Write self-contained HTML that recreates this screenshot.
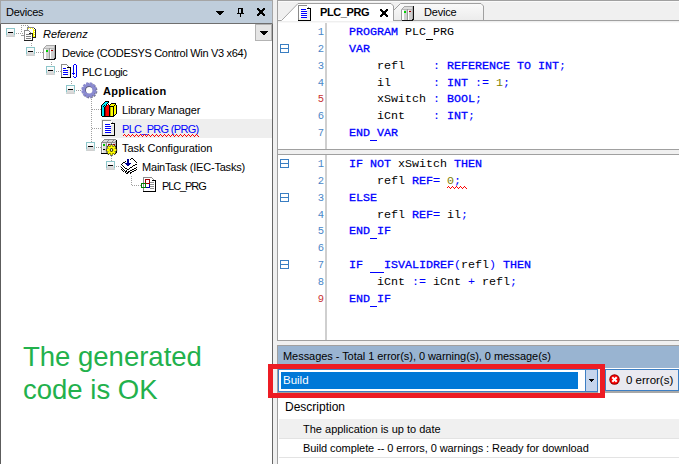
<!DOCTYPE html>
<html><head><meta charset="utf-8">
<style>
*{margin:0;padding:0;box-sizing:border-box}
html,body{width:679px;height:464px;overflow:hidden;background:#f0f0f0;position:relative;font-family:"Liberation Sans",sans-serif}
.a{position:absolute}
.t{position:absolute;white-space:nowrap;font-size:11px;line-height:13px;color:#000}
.c{position:absolute;font-family:"Liberation Mono",monospace;font-size:11.667px;letter-spacing:0px;line-height:13px;white-space:pre;color:#000}
.k{color:#0000ff;-webkit-text-stroke:0.3px #0000ff}
.o{color:#0000ff}
.n{color:#808000}
.u{position:relative;-webkit-text-fill-color:transparent;-webkit-text-stroke:0}
.u:after{content:"";position:absolute;left:0;width:7px;bottom:-1px;height:1px;background:currentColor}
.ln{position:absolute;font-family:"Liberation Mono",monospace;font-size:10.5px;line-height:12px;color:#3d7cc0;text-align:right;width:30px}
svg{position:absolute;overflow:visible}
</style></head><body>

<div class="a" style="left:0;top:0;width:273px;height:464px;background:#fff;border-left:1px solid #5c5c5c;border-right:1px solid #666"></div>
<div class="a" style="left:0;top:0;width:273px;height:24px;background:#bfcddb;border-top:1px solid #a5a5a5;border-left:1px solid #a5a5a5;border-right:1px solid #a5a5a5;border-bottom:1px solid #6f6f6f"></div>
<div class="t" style="left:6px;top:6px;letter-spacing:-0.27px">Devices</div>
<svg style="left:0;top:0" width="273" height="45" shape-rendering="crispEdges"><rect x="216" y="11" width="8" height="1" fill="#000"/><rect x="217" y="12" width="6" height="1" fill="#000"/><rect x="218" y="13" width="4" height="1" fill="#000"/><rect x="219" y="14" width="2" height="1" fill="#000"/><rect x="238" y="8" width="5" height="1" fill="#000"/><rect x="238" y="9" width="1" height="4" fill="#000"/><rect x="241" y="9" width="2" height="4" fill="#000"/><rect x="237" y="13" width="7" height="1" fill="#000"/><rect x="240" y="14" width="1" height="3" fill="#000"/><rect x="257" y="8" width="2" height="1" fill="#000"/><rect x="263" y="8" width="2" height="1" fill="#000"/><rect x="257" y="9" width="3" height="1" fill="#000"/><rect x="262" y="9" width="3" height="1" fill="#000"/><rect x="258" y="10" width="6" height="1" fill="#000"/><rect x="259" y="11" width="4" height="1" fill="#000"/><rect x="259" y="12" width="4" height="1" fill="#000"/><rect x="258" y="13" width="6" height="1" fill="#000"/><rect x="257" y="14" width="3" height="1" fill="#000"/><rect x="262" y="14" width="3" height="1" fill="#000"/><rect x="257" y="15" width="2" height="1" fill="#000"/><rect x="263" y="15" width="2" height="1" fill="#000"/><rect x="255.5" y="24.5" width="16" height="16" fill="#e5e5e5" stroke="#b3b3b3"/><rect x="260" y="31" width="8" height="1" fill="#000"/><rect x="261" y="32" width="6" height="1" fill="#000"/><rect x="262" y="33" width="4" height="1" fill="#000"/><rect x="263" y="34" width="2" height="1" fill="#000"/></svg>
<svg style="left:0;top:0" width="273" height="200" shape-rendering="crispEdges"><defs><linearGradient id="eg" x1="0" y1="0" x2="0" y2="1"><stop offset="0" stop-color="#fff"/><stop offset="0.45" stop-color="#f6f6f6"/><stop offset="0.6" stop-color="#dedede"/><stop offset="1" stop-color="#d4d4d4"/></linearGradient></defs><rect x="6" y="28" width="9" height="9" fill="url(#eg)"/><rect x="6" y="28" width="9" height="1" fill="#8cc6ca"/><rect x="6" y="29" width="1" height="6" fill="#8cc6ca"/><rect x="14" y="29" width="1" height="6" fill="#8cc6ca"/><rect x="6" y="35" width="1" height="2" fill="#c8d8d8"/><rect x="14" y="35" width="1" height="2" fill="#c8d8d8"/><rect x="7" y="36" width="7" height="1" fill="#d0d0d0"/><rect x="8" y="32" width="5" height="1" fill="#000"/><rect x="16" y="33" width="1" height="1" fill="#a0a0a0"/><rect x="18" y="33" width="1" height="1" fill="#a0a0a0"/><rect x="20" y="33" width="1" height="1" fill="#a0a0a0"/><rect x="22" y="33" width="1" height="1" fill="#a0a0a0"/><rect x="31" y="43" width="1" height="1" fill="#a0a0a0"/><rect x="31" y="45" width="1" height="1" fill="#a0a0a0"/><rect x="26" y="47" width="9" height="9" fill="url(#eg)"/><rect x="26" y="47" width="9" height="1" fill="#8cc6ca"/><rect x="26" y="48" width="1" height="6" fill="#8cc6ca"/><rect x="34" y="48" width="1" height="6" fill="#8cc6ca"/><rect x="26" y="54" width="1" height="2" fill="#c8d8d8"/><rect x="34" y="54" width="1" height="2" fill="#c8d8d8"/><rect x="27" y="55" width="7" height="1" fill="#d0d0d0"/><rect x="28" y="51" width="5" height="1" fill="#000"/><rect x="36" y="52" width="1" height="1" fill="#a0a0a0"/><rect x="38" y="52" width="1" height="1" fill="#a0a0a0"/><rect x="40" y="52" width="1" height="1" fill="#a0a0a0"/><rect x="42" y="52" width="1" height="1" fill="#a0a0a0"/><rect x="51" y="62" width="1" height="1" fill="#a0a0a0"/><rect x="51" y="64" width="1" height="1" fill="#a0a0a0"/><rect x="46" y="66" width="9" height="9" fill="url(#eg)"/><rect x="46" y="66" width="9" height="1" fill="#8cc6ca"/><rect x="46" y="67" width="1" height="6" fill="#8cc6ca"/><rect x="54" y="67" width="1" height="6" fill="#8cc6ca"/><rect x="46" y="73" width="1" height="2" fill="#c8d8d8"/><rect x="54" y="73" width="1" height="2" fill="#c8d8d8"/><rect x="47" y="74" width="7" height="1" fill="#d0d0d0"/><rect x="48" y="70" width="5" height="1" fill="#000"/><rect x="56" y="71" width="1" height="1" fill="#a0a0a0"/><rect x="58" y="71" width="1" height="1" fill="#a0a0a0"/><rect x="60" y="71" width="1" height="1" fill="#a0a0a0"/><rect x="71" y="81" width="1" height="1" fill="#a0a0a0"/><rect x="71" y="83" width="1" height="1" fill="#a0a0a0"/><rect x="66" y="85" width="9" height="9" fill="url(#eg)"/><rect x="66" y="85" width="9" height="1" fill="#8cc6ca"/><rect x="66" y="86" width="1" height="6" fill="#8cc6ca"/><rect x="74" y="86" width="1" height="6" fill="#8cc6ca"/><rect x="66" y="92" width="1" height="2" fill="#c8d8d8"/><rect x="74" y="92" width="1" height="2" fill="#c8d8d8"/><rect x="67" y="93" width="7" height="1" fill="#d0d0d0"/><rect x="68" y="89" width="5" height="1" fill="#000"/><rect x="76" y="90" width="1" height="1" fill="#a0a0a0"/><rect x="78" y="90" width="1" height="1" fill="#a0a0a0"/><rect x="80" y="90" width="1" height="1" fill="#a0a0a0"/><rect x="91" y="99" width="1" height="1" fill="#a0a0a0"/><rect x="91" y="101" width="1" height="1" fill="#a0a0a0"/><rect x="91" y="103" width="1" height="1" fill="#a0a0a0"/><rect x="91" y="105" width="1" height="1" fill="#a0a0a0"/><rect x="91" y="107" width="1" height="1" fill="#a0a0a0"/><rect x="91" y="109" width="1" height="1" fill="#a0a0a0"/><rect x="91" y="111" width="1" height="1" fill="#a0a0a0"/><rect x="91" y="113" width="1" height="1" fill="#a0a0a0"/><rect x="91" y="115" width="1" height="1" fill="#a0a0a0"/><rect x="91" y="117" width="1" height="1" fill="#a0a0a0"/><rect x="91" y="119" width="1" height="1" fill="#a0a0a0"/><rect x="91" y="121" width="1" height="1" fill="#a0a0a0"/><rect x="91" y="123" width="1" height="1" fill="#a0a0a0"/><rect x="91" y="125" width="1" height="1" fill="#a0a0a0"/><rect x="91" y="127" width="1" height="1" fill="#a0a0a0"/><rect x="91" y="129" width="1" height="1" fill="#a0a0a0"/><rect x="91" y="131" width="1" height="1" fill="#a0a0a0"/><rect x="91" y="133" width="1" height="1" fill="#a0a0a0"/><rect x="91" y="135" width="1" height="1" fill="#a0a0a0"/><rect x="91" y="137" width="1" height="1" fill="#a0a0a0"/><rect x="91" y="139" width="1" height="1" fill="#a0a0a0"/><rect x="91" y="141" width="1" height="1" fill="#a0a0a0"/><rect x="92" y="109" width="1" height="1" fill="#a0a0a0"/><rect x="94" y="109" width="1" height="1" fill="#a0a0a0"/><rect x="96" y="109" width="1" height="1" fill="#a0a0a0"/><rect x="98" y="109" width="1" height="1" fill="#a0a0a0"/><rect x="100" y="109" width="1" height="1" fill="#a0a0a0"/><rect x="92" y="128" width="1" height="1" fill="#a0a0a0"/><rect x="94" y="128" width="1" height="1" fill="#a0a0a0"/><rect x="96" y="128" width="1" height="1" fill="#a0a0a0"/><rect x="98" y="128" width="1" height="1" fill="#a0a0a0"/><rect x="100" y="128" width="1" height="1" fill="#a0a0a0"/><rect x="86" y="142" width="9" height="9" fill="url(#eg)"/><rect x="86" y="142" width="9" height="1" fill="#8cc6ca"/><rect x="86" y="143" width="1" height="6" fill="#8cc6ca"/><rect x="94" y="143" width="1" height="6" fill="#8cc6ca"/><rect x="86" y="149" width="1" height="2" fill="#c8d8d8"/><rect x="94" y="149" width="1" height="2" fill="#c8d8d8"/><rect x="87" y="150" width="7" height="1" fill="#d0d0d0"/><rect x="88" y="146" width="5" height="1" fill="#000"/><rect x="96" y="147" width="1" height="1" fill="#a0a0a0"/><rect x="98" y="147" width="1" height="1" fill="#a0a0a0"/><rect x="100" y="147" width="1" height="1" fill="#a0a0a0"/><rect x="111" y="156" width="1" height="1" fill="#a0a0a0"/><rect x="111" y="158" width="1" height="1" fill="#a0a0a0"/><rect x="111" y="160" width="1" height="1" fill="#a0a0a0"/><rect x="106" y="161" width="9" height="9" fill="url(#eg)"/><rect x="106" y="161" width="9" height="1" fill="#8cc6ca"/><rect x="106" y="162" width="1" height="6" fill="#8cc6ca"/><rect x="114" y="162" width="1" height="6" fill="#8cc6ca"/><rect x="106" y="168" width="1" height="2" fill="#c8d8d8"/><rect x="114" y="168" width="1" height="2" fill="#c8d8d8"/><rect x="107" y="169" width="7" height="1" fill="#d0d0d0"/><rect x="108" y="165" width="5" height="1" fill="#000"/><rect x="116" y="166" width="1" height="1" fill="#a0a0a0"/><rect x="118" y="166" width="1" height="1" fill="#a0a0a0"/><rect x="120" y="166" width="1" height="1" fill="#a0a0a0"/><rect x="131" y="176" width="1" height="1" fill="#a0a0a0"/><rect x="131" y="178" width="1" height="1" fill="#a0a0a0"/><rect x="131" y="180" width="1" height="1" fill="#a0a0a0"/><rect x="131" y="182" width="1" height="1" fill="#a0a0a0"/><rect x="131" y="184" width="1" height="1" fill="#a0a0a0"/><rect x="132" y="185" width="1" height="1" fill="#a0a0a0"/><rect x="134" y="185" width="1" height="1" fill="#a0a0a0"/><rect x="136" y="185" width="1" height="1" fill="#a0a0a0"/><rect x="138" y="185" width="1" height="1" fill="#a0a0a0"/><rect x="140" y="185" width="1" height="1" fill="#a0a0a0"/></svg>
<div class="a" style="left:101px;top:119px;width:171px;height:19px;background:#eeeeee"></div>
<svg style="left:0;top:0" width="273" height="200" shape-rendering="crispEdges"><rect x="21" y="25" width="1" height="1" fill="#999"/><rect x="23" y="25" width="1" height="1" fill="#999"/><rect x="25" y="25" width="1" height="1" fill="#999"/><rect x="27" y="25" width="1" height="1" fill="#999"/><rect x="21" y="27" width="1" height="1" fill="#999"/><rect x="21" y="29" width="1" height="1" fill="#999"/><rect x="21" y="31" width="1" height="1" fill="#999"/><rect x="28" y="26" width="1" height="1" fill="#999"/><rect x="21" y="35" width="3" height="1" fill="#999"/><rect x="27" y="27" width="7" height="1" fill="#8a8a8a"/><rect x="27" y="27" width="1" height="3" fill="#8a8a8a"/><rect x="28" y="28" width="6" height="1" fill="#ffff00"/><rect x="33" y="28" width="2" height="9" fill="#ffff00"/><rect x="28" y="29" width="5" height="1" fill="#ffffff"/><rect x="29" y="28" width="1" height="1" fill="#fff"/><rect x="31" y="28" width="1" height="1" fill="#fff"/><rect x="33" y="28" width="1" height="1" fill="#fff"/><rect x="34" y="29" width="1" height="1" fill="#fff"/><rect x="34" y="31" width="1" height="1" fill="#fff"/><rect x="34" y="33" width="1" height="1" fill="#fff"/><rect x="34" y="35" width="1" height="1" fill="#fff"/><rect x="34" y="37" width="1" height="1" fill="#fff"/><rect x="35" y="29" width="1" height="9" fill="#222"/><rect x="32" y="37" width="4" height="1" fill="#222"/><rect x="34" y="28" width="1" height="1" fill="#222"/><rect x="24" y="30" width="5" height="11" fill="#fff"/><rect x="29" y="33" width="3" height="7" fill="#fff"/><rect x="24" y="30" width="1" height="10" fill="#8a8a8a"/><rect x="24" y="30" width="5" height="1" fill="#8a8a8a"/><rect x="29" y="31" width="1" height="1" fill="#8a8a8a"/><rect x="30" y="32" width="1" height="1" fill="#8a8a8a"/><rect x="29" y="33" width="4" height="1" fill="#222"/><rect x="32" y="33" width="1" height="8" fill="#222"/><rect x="24" y="40" width="9" height="1" fill="#222"/><rect x="26" y="34" width="5" height="1" fill="#808080"/><rect x="26" y="36" width="5" height="1" fill="#808080"/><rect x="26" y="38" width="5" height="1" fill="#808080"/><rect x="46" y="45" width="10" height="1" fill="#a8a8a8"/><rect x="45" y="46" width="1" height="1" fill="#a8a8a8"/><rect x="44" y="47" width="1" height="1" fill="#a8a8a8"/><rect x="46" y="46" width="9" height="2" fill="#dcdcdc"/><rect x="45" y="47" width="9" height="1" fill="#dcdcdc"/><rect x="43" y="48" width="1" height="11" fill="#9a9a9a"/><rect x="43" y="48" width="11" height="1" fill="#b8b8b8"/><rect x="44" y="49" width="2" height="10" fill="#ffffff"/><rect x="46" y="49" width="3" height="10" fill="#cfcfcf"/><rect x="49" y="48" width="1" height="11" fill="#9a9a9a"/><rect x="50" y="49" width="1" height="10" fill="#ffffff"/><rect x="51" y="49" width="3" height="10" fill="#cfcfcf"/><rect x="54" y="46" width="1" height="13" fill="#b0b0b0"/><rect x="55" y="45" width="1" height="14" fill="#111"/><rect x="44" y="59" width="11" height="1" fill="#111"/><rect x="54" y="58" width="1" height="1" fill="#111"/><rect x="46" y="50" width="2" height="2" fill="#00d000"/><rect x="51" y="50" width="2" height="1" fill="#a00000"/><rect x="61" y="64" width="6" height="13" fill="#fff"/><rect x="67" y="67" width="3" height="10" fill="#f4f4f0"/><rect x="61" y="64" width="1" height="13" fill="#8a8a8a"/><rect x="61" y="64" width="6" height="1" fill="#8a8a8a"/><rect x="67" y="65" width="1" height="1" fill="#8a8a8a"/><rect x="68" y="66" width="1" height="1" fill="#8a8a8a"/><rect x="67" y="67" width="4" height="1" fill="#000"/><rect x="70" y="67" width="1" height="11" fill="#000"/><rect x="61" y="77" width="10" height="1" fill="#000"/><rect x="63" y="68" width="3" height="1" fill="#0000ff"/><rect x="63" y="70" width="5" height="1" fill="#0000ff"/><rect x="63" y="72" width="5" height="1" fill="#0000ff"/><rect x="63" y="74" width="5" height="1" fill="#0000ff"/><rect x="74" y="64" width="2" height="1" fill="#0000ff"/><rect x="73" y="65" width="1" height="9" fill="#0000ff"/><rect x="76" y="65" width="1" height="12" fill="#0000ff"/><rect x="74" y="77" width="2" height="1" fill="#0000ff"/><rect x="72" y="73" width="3" height="1" fill="#0000ff"/><rect x="73" y="74" width="1" height="1" fill="#0000ff"/><rect x="73" y="76" width="1" height="1" fill="#0000ff"/><rect x="105" y="101" width="4" height="1" fill="#000"/><rect x="104" y="102" width="1" height="1" fill="#000"/><rect x="105" y="102" width="3" height="1" fill="#00e8f8"/><rect x="108" y="102" width="1" height="1" fill="#000"/><rect x="103" y="103" width="1" height="1" fill="#000"/><rect x="104" y="103" width="3" height="1" fill="#00e8f8"/><rect x="107" y="103" width="1" height="1" fill="#000"/><rect x="111" y="103" width="5" height="1" fill="#000"/><rect x="102" y="104" width="1" height="1" fill="#000"/><rect x="103" y="104" width="3" height="1" fill="#00e8f8"/><rect x="106" y="104" width="1" height="1" fill="#000"/><rect x="108" y="104" width="1" height="1" fill="#000"/><rect x="110" y="104" width="1" height="1" fill="#000"/><rect x="111" y="104" width="4" height="1" fill="#ffff00"/><rect x="115" y="104" width="1" height="1" fill="#000"/><rect x="101" y="105" width="1" height="1" fill="#000"/><rect x="102" y="105" width="2" height="1" fill="#00e8f8"/><rect x="104" y="105" width="1" height="1" fill="#000"/><rect x="105" y="105" width="1" height="1" fill="#00e8f8"/><rect x="106" y="105" width="1" height="1" fill="#000"/><rect x="107" y="105" width="2" height="1" fill="#ff0000"/><rect x="109" y="105" width="1" height="1" fill="#000"/><rect x="110" y="105" width="4" height="1" fill="#ffff00"/><rect x="114" y="105" width="1" height="1" fill="#000"/><rect x="115" y="105" width="1" height="1" fill="#ffff00"/><rect x="116" y="105" width="1" height="1" fill="#000"/><rect x="101" y="106" width="1" height="1" fill="#000"/><rect x="102" y="106" width="1" height="1" fill="#00e8f8"/><rect x="103" y="106" width="1" height="1" fill="#000"/><rect x="104" y="106" width="1" height="1" fill="#00e8f8"/><rect x="105" y="106" width="1" height="1" fill="#000"/><rect x="106" y="106" width="3" height="1" fill="#ff0000"/><rect x="109" y="106" width="5" height="1" fill="#000"/><rect x="114" y="106" width="2" height="1" fill="#ffff00"/><rect x="116" y="106" width="1" height="1" fill="#000"/><rect x="101" y="107" width="1" height="1" fill="#000"/><rect x="102" y="107" width="2" height="1" fill="#00e8f8"/><rect x="104" y="107" width="1" height="1" fill="#000"/><rect x="105" y="107" width="1" height="1" fill="#a00000"/><rect x="106" y="107" width="3" height="1" fill="#ff0000"/><rect x="109" y="107" width="1" height="1" fill="#000"/><rect x="110" y="107" width="1" height="1" fill="#a8a800"/><rect x="111" y="107" width="2" height="1" fill="#ffff00"/><rect x="113" y="107" width="1" height="1" fill="#000"/><rect x="114" y="107" width="2" height="1" fill="#ffff00"/><rect x="116" y="107" width="1" height="1" fill="#000"/><rect x="101" y="108" width="1" height="1" fill="#000"/><rect x="102" y="108" width="2" height="1" fill="#00e8f8"/><rect x="104" y="108" width="1" height="1" fill="#000"/><rect x="105" y="108" width="1" height="1" fill="#a00000"/><rect x="106" y="108" width="3" height="1" fill="#ff0000"/><rect x="109" y="108" width="1" height="1" fill="#000"/><rect x="110" y="108" width="1" height="1" fill="#a8a800"/><rect x="111" y="108" width="2" height="1" fill="#ffff00"/><rect x="113" y="108" width="1" height="1" fill="#000"/><rect x="114" y="108" width="2" height="1" fill="#ffff00"/><rect x="116" y="108" width="1" height="1" fill="#000"/><rect x="101" y="109" width="1" height="1" fill="#000"/><rect x="102" y="109" width="2" height="1" fill="#00e8f8"/><rect x="104" y="109" width="1" height="1" fill="#000"/><rect x="105" y="109" width="1" height="1" fill="#a00000"/><rect x="106" y="109" width="3" height="1" fill="#ff0000"/><rect x="109" y="109" width="1" height="1" fill="#000"/><rect x="110" y="109" width="1" height="1" fill="#a8a800"/><rect x="111" y="109" width="2" height="1" fill="#ffff00"/><rect x="113" y="109" width="1" height="1" fill="#000"/><rect x="114" y="109" width="2" height="1" fill="#ffff00"/><rect x="116" y="109" width="1" height="1" fill="#000"/><rect x="101" y="110" width="1" height="1" fill="#000"/><rect x="102" y="110" width="2" height="1" fill="#00e8f8"/><rect x="104" y="110" width="1" height="1" fill="#000"/><rect x="105" y="110" width="1" height="1" fill="#a00000"/><rect x="106" y="110" width="3" height="1" fill="#ff0000"/><rect x="109" y="110" width="1" height="1" fill="#000"/><rect x="110" y="110" width="1" height="1" fill="#a8a800"/><rect x="111" y="110" width="2" height="1" fill="#ffff00"/><rect x="113" y="110" width="1" height="1" fill="#000"/><rect x="114" y="110" width="2" height="1" fill="#ffff00"/><rect x="116" y="110" width="1" height="1" fill="#000"/><rect x="101" y="111" width="1" height="1" fill="#000"/><rect x="102" y="111" width="2" height="1" fill="#00e8f8"/><rect x="104" y="111" width="1" height="1" fill="#000"/><rect x="105" y="111" width="1" height="1" fill="#a00000"/><rect x="106" y="111" width="3" height="1" fill="#ff0000"/><rect x="109" y="111" width="1" height="1" fill="#000"/><rect x="110" y="111" width="1" height="1" fill="#a8a800"/><rect x="111" y="111" width="2" height="1" fill="#ffff00"/><rect x="113" y="111" width="1" height="1" fill="#000"/><rect x="114" y="111" width="2" height="1" fill="#ffff00"/><rect x="116" y="111" width="1" height="1" fill="#000"/><rect x="101" y="112" width="1" height="1" fill="#000"/><rect x="102" y="112" width="2" height="1" fill="#00e8f8"/><rect x="104" y="112" width="1" height="1" fill="#000"/><rect x="105" y="112" width="1" height="1" fill="#a00000"/><rect x="106" y="112" width="3" height="1" fill="#ff0000"/><rect x="109" y="112" width="1" height="1" fill="#000"/><rect x="110" y="112" width="1" height="1" fill="#a8a800"/><rect x="111" y="112" width="2" height="1" fill="#ffff00"/><rect x="113" y="112" width="1" height="1" fill="#000"/><rect x="114" y="112" width="2" height="1" fill="#ffff00"/><rect x="116" y="112" width="1" height="1" fill="#000"/><rect x="101" y="113" width="1" height="1" fill="#000"/><rect x="102" y="113" width="2" height="1" fill="#00e8f8"/><rect x="104" y="113" width="1" height="1" fill="#000"/><rect x="105" y="113" width="1" height="1" fill="#a00000"/><rect x="106" y="113" width="3" height="1" fill="#ff0000"/><rect x="109" y="113" width="1" height="1" fill="#000"/><rect x="110" y="113" width="1" height="1" fill="#a8a800"/><rect x="111" y="113" width="2" height="1" fill="#ffff00"/><rect x="113" y="113" width="1" height="1" fill="#000"/><rect x="114" y="113" width="2" height="1" fill="#ffff00"/><rect x="116" y="113" width="1" height="1" fill="#000"/><rect x="101" y="114" width="1" height="1" fill="#000"/><rect x="102" y="114" width="2" height="1" fill="#00e8f8"/><rect x="104" y="114" width="1" height="1" fill="#000"/><rect x="105" y="114" width="1" height="1" fill="#a00000"/><rect x="106" y="114" width="3" height="1" fill="#ff0000"/><rect x="109" y="114" width="1" height="1" fill="#000"/><rect x="110" y="114" width="1" height="1" fill="#a8a800"/><rect x="111" y="114" width="2" height="1" fill="#ffff00"/><rect x="113" y="114" width="1" height="1" fill="#000"/><rect x="114" y="114" width="1" height="1" fill="#ffff00"/><rect x="115" y="114" width="1" height="1" fill="#000"/><rect x="101" y="115" width="1" height="1" fill="#000"/><rect x="102" y="115" width="2" height="1" fill="#00e8f8"/><rect x="104" y="115" width="1" height="1" fill="#000"/><rect x="105" y="115" width="1" height="1" fill="#a00000"/><rect x="106" y="115" width="3" height="1" fill="#ff0000"/><rect x="109" y="115" width="1" height="1" fill="#000"/><rect x="110" y="115" width="1" height="1" fill="#a8a800"/><rect x="111" y="115" width="2" height="1" fill="#ffff00"/><rect x="113" y="115" width="2" height="1" fill="#000"/><rect x="102" y="116" width="12" height="1" fill="#000"/><rect x="102" y="120" width="9" height="15" fill="#fff"/><rect x="111" y="123" width="3" height="12" fill="#fff"/><rect x="111" y="125" width="3" height="10" fill="#ececec"/><rect x="103" y="133" width="11" height="2" fill="#f4f4ee"/><rect x="102" y="120" width="1" height="15" fill="#8a8a8a"/><rect x="102" y="120" width="9" height="1" fill="#8a8a8a"/><rect x="111" y="121" width="1" height="1" fill="#8a8a8a"/><rect x="112" y="122" width="1" height="1" fill="#8a8a8a"/><rect x="113" y="123" width="1" height="1" fill="#aaa"/><rect x="111" y="123" width="4" height="1" fill="#000"/><rect x="111" y="121" width="1" height="2" fill="#fff"/><rect x="114" y="123" width="1" height="13" fill="#000"/><rect x="102" y="135" width="13" height="1" fill="#000"/><rect x="105" y="124" width="5" height="1" fill="#0000ff"/><rect x="105" y="126" width="6" height="1" fill="#0000ff"/><rect x="105" y="128" width="6" height="1" fill="#0000ff"/><rect x="105" y="130" width="6" height="1" fill="#0000ff"/><rect x="105" y="132" width="6" height="1" fill="#0000ff"/><rect x="104" y="139" width="12" height="1" fill="#8c8c8c"/><rect x="103" y="140" width="1" height="1" fill="#8c8c8c"/><rect x="104" y="140" width="4" height="1" fill="#d8d8d8"/><rect x="108" y="140" width="1" height="1" fill="#8c8c8c"/><rect x="109" y="140" width="4" height="1" fill="#d8d8d8"/><rect x="113" y="140" width="1" height="1" fill="#8c8c8c"/><rect x="114" y="140" width="2" height="1" fill="#d8d8d8"/><rect x="116" y="140" width="1" height="1" fill="#000"/><rect x="102" y="141" width="1" height="1" fill="#8c8c8c"/><rect x="103" y="141" width="4" height="1" fill="#d8d8d8"/><rect x="107" y="141" width="1" height="1" fill="#8c8c8c"/><rect x="108" y="141" width="4" height="1" fill="#d8d8d8"/><rect x="112" y="141" width="1" height="1" fill="#8c8c8c"/><rect x="113" y="141" width="2" height="1" fill="#d8d8d8"/><rect x="115" y="141" width="1" height="1" fill="#8c8c8c"/><rect x="116" y="141" width="1" height="1" fill="#000"/><rect x="101" y="142" width="14" height="1" fill="#8c8c8c"/><rect x="115" y="142" width="1" height="1" fill="#b0b0b0"/><rect x="116" y="142" width="1" height="1" fill="#000"/><rect x="101" y="143" width="1" height="1" fill="#8c8c8c"/><rect x="102" y="143" width="4" height="1" fill="#dedede"/><rect x="106" y="143" width="1" height="1" fill="#8c8c8c"/><rect x="107" y="143" width="4" height="1" fill="#dedede"/><rect x="111" y="143" width="1" height="1" fill="#8c8c8c"/><rect x="112" y="143" width="3" height="1" fill="#dedede"/><rect x="115" y="143" width="1" height="1" fill="#b0b0b0"/><rect x="116" y="143" width="1" height="1" fill="#000"/><rect x="101" y="144" width="1" height="1" fill="#8c8c8c"/><rect x="102" y="144" width="1" height="1" fill="#dedede"/><rect x="103" y="144" width="2" height="1" fill="#00c000"/><rect x="105" y="144" width="1" height="1" fill="#dedede"/><rect x="106" y="144" width="1" height="1" fill="#8c8c8c"/><rect x="107" y="144" width="1" height="1" fill="#dedede"/><rect x="108" y="144" width="2" height="1" fill="#a00000"/><rect x="110" y="144" width="1" height="1" fill="#dedede"/><rect x="111" y="144" width="1" height="1" fill="#8c8c8c"/><rect x="112" y="144" width="1" height="1" fill="#dedede"/><rect x="113" y="144" width="2" height="1" fill="#a00000"/><rect x="115" y="144" width="1" height="1" fill="#b0b0b0"/><rect x="116" y="144" width="1" height="1" fill="#000"/><rect x="101" y="145" width="1" height="1" fill="#8c8c8c"/><rect x="102" y="145" width="1" height="1" fill="#dedede"/><rect x="103" y="145" width="2" height="1" fill="#00c000"/><rect x="105" y="145" width="1" height="1" fill="#dedede"/><rect x="106" y="145" width="1" height="1" fill="#8c8c8c"/><rect x="107" y="145" width="4" height="1" fill="#dedede"/><rect x="111" y="145" width="1" height="1" fill="#8c8c8c"/><rect x="112" y="145" width="3" height="1" fill="#dedede"/><rect x="115" y="145" width="1" height="1" fill="#b0b0b0"/><rect x="116" y="145" width="1" height="1" fill="#000"/><rect x="101" y="146" width="1" height="1" fill="#8c8c8c"/><rect x="102" y="146" width="4" height="1" fill="#dedede"/><rect x="106" y="146" width="1" height="1" fill="#8c8c8c"/><rect x="107" y="146" width="4" height="1" fill="#dedede"/><rect x="111" y="146" width="1" height="1" fill="#8c8c8c"/><rect x="112" y="146" width="3" height="1" fill="#dedede"/><rect x="115" y="146" width="1" height="1" fill="#b0b0b0"/><rect x="116" y="146" width="1" height="1" fill="#000"/><rect x="101" y="147" width="1" height="1" fill="#8c8c8c"/><rect x="102" y="147" width="4" height="1" fill="#dedede"/><rect x="106" y="147" width="1" height="1" fill="#8c8c8c"/><rect x="107" y="147" width="4" height="1" fill="#dedede"/><rect x="111" y="147" width="1" height="1" fill="#8c8c8c"/><rect x="112" y="147" width="3" height="1" fill="#dedede"/><rect x="115" y="147" width="1" height="1" fill="#b0b0b0"/><rect x="116" y="147" width="1" height="1" fill="#000"/><rect x="101" y="148" width="1" height="1" fill="#8c8c8c"/><rect x="102" y="148" width="4" height="1" fill="#dedede"/><rect x="106" y="148" width="1" height="1" fill="#8c8c8c"/><rect x="107" y="148" width="4" height="1" fill="#dedede"/><rect x="111" y="148" width="1" height="1" fill="#8c8c8c"/><rect x="112" y="148" width="3" height="1" fill="#dedede"/><rect x="115" y="148" width="1" height="1" fill="#b0b0b0"/><rect x="116" y="148" width="1" height="1" fill="#000"/><rect x="101" y="149" width="1" height="1" fill="#8c8c8c"/><rect x="102" y="149" width="1" height="1" fill="#dedede"/><rect x="103" y="149" width="2" height="1" fill="#000"/><rect x="105" y="149" width="1" height="1" fill="#dedede"/><rect x="106" y="149" width="1" height="1" fill="#8c8c8c"/><rect x="107" y="149" width="4" height="1" fill="#dedede"/><rect x="111" y="149" width="1" height="1" fill="#8c8c8c"/><rect x="112" y="149" width="3" height="1" fill="#dedede"/><rect x="115" y="149" width="1" height="1" fill="#b0b0b0"/><rect x="116" y="149" width="1" height="1" fill="#000"/><rect x="101" y="150" width="1" height="1" fill="#8c8c8c"/><rect x="102" y="150" width="4" height="1" fill="#dedede"/><rect x="106" y="150" width="1" height="1" fill="#8c8c8c"/><rect x="107" y="150" width="4" height="1" fill="#dedede"/><rect x="111" y="150" width="1" height="1" fill="#8c8c8c"/><rect x="112" y="150" width="3" height="1" fill="#dedede"/><rect x="115" y="150" width="1" height="1" fill="#b0b0b0"/><rect x="116" y="150" width="1" height="1" fill="#000"/><rect x="101" y="151" width="1" height="1" fill="#8c8c8c"/><rect x="102" y="151" width="4" height="1" fill="#dedede"/><rect x="106" y="151" width="1" height="1" fill="#8c8c8c"/><rect x="107" y="151" width="4" height="1" fill="#dedede"/><rect x="111" y="151" width="1" height="1" fill="#8c8c8c"/><rect x="112" y="151" width="3" height="1" fill="#dedede"/><rect x="115" y="151" width="1" height="1" fill="#b0b0b0"/><rect x="116" y="151" width="1" height="1" fill="#000"/><rect x="101" y="152" width="1" height="1" fill="#8c8c8c"/><rect x="102" y="152" width="4" height="1" fill="#dedede"/><rect x="106" y="152" width="1" height="1" fill="#8c8c8c"/><rect x="107" y="152" width="4" height="1" fill="#dedede"/><rect x="111" y="152" width="1" height="1" fill="#8c8c8c"/><rect x="112" y="152" width="3" height="1" fill="#dedede"/><rect x="115" y="152" width="1" height="1" fill="#b0b0b0"/><rect x="116" y="152" width="1" height="1" fill="#000"/><rect x="101" y="153" width="15" height="1" fill="#000"/><rect x="102" y="143" width="1" height="10" fill="#f8f8f8"/><rect x="107" y="143" width="1" height="10" fill="#f8f8f8"/><rect x="112" y="143" width="1" height="10" fill="#f8f8f8"/><rect x="131" y="158" width="2" height="1" fill="#000"/><rect x="127" y="159" width="2" height="1" fill="#000090"/><rect x="130" y="159" width="1" height="1" fill="#000"/><rect x="133" y="159" width="1" height="1" fill="#000"/><rect x="127" y="160" width="2" height="1" fill="#000090"/><rect x="134" y="160" width="1" height="1" fill="#000"/><rect x="125" y="161" width="1" height="1" fill="#000"/><rect x="127" y="161" width="2" height="1" fill="#000090"/><rect x="135" y="161" width="1" height="1" fill="#000"/><rect x="123" y="162" width="2" height="1" fill="#000"/><rect x="127" y="162" width="2" height="1" fill="#000090"/><rect x="136" y="162" width="1" height="1" fill="#000"/><rect x="122" y="163" width="1" height="1" fill="#000"/><rect x="125" y="163" width="6" height="1" fill="#000090"/><rect x="121" y="164" width="1" height="1" fill="#000"/><rect x="126" y="164" width="4" height="1" fill="#000090"/><rect x="135" y="164" width="2" height="1" fill="#000"/><rect x="122" y="165" width="1" height="1" fill="#000"/><rect x="127" y="165" width="2" height="1" fill="#000090"/><rect x="133" y="165" width="2" height="1" fill="#000"/><rect x="123" y="166" width="1" height="1" fill="#000"/><rect x="132" y="166" width="1" height="1" fill="#000"/><rect x="121" y="167" width="1" height="1" fill="#000"/><rect x="124" y="167" width="1" height="1" fill="#000"/><rect x="130" y="167" width="2" height="1" fill="#000"/><rect x="136" y="167" width="1" height="1" fill="#000"/><rect x="122" y="168" width="1" height="1" fill="#000"/><rect x="125" y="168" width="2" height="1" fill="#000"/><rect x="129" y="168" width="1" height="1" fill="#000"/><rect x="134" y="168" width="2" height="1" fill="#000"/><rect x="121" y="169" width="1" height="1" fill="#000"/><rect x="123" y="169" width="1" height="1" fill="#000"/><rect x="127" y="169" width="2" height="1" fill="#000"/><rect x="132" y="169" width="2" height="1" fill="#000"/><rect x="136" y="169" width="1" height="1" fill="#000"/><rect x="122" y="170" width="1" height="1" fill="#000"/><rect x="124" y="170" width="1" height="1" fill="#000"/><rect x="126" y="170" width="1" height="1" fill="#000"/><rect x="130" y="170" width="2" height="1" fill="#000"/><rect x="134" y="170" width="2" height="1" fill="#000"/><rect x="123" y="171" width="1" height="1" fill="#000"/><rect x="125" y="171" width="2" height="1" fill="#000"/><rect x="128" y="171" width="2" height="1" fill="#000"/><rect x="132" y="171" width="2" height="1" fill="#000"/><rect x="125" y="172" width="1" height="1" fill="#000"/><rect x="127" y="172" width="2" height="1" fill="#000"/><rect x="130" y="172" width="2" height="1" fill="#000"/><rect x="126" y="173" width="2" height="1" fill="#000"/><rect x="130" y="173" width="1" height="1" fill="#000"/><rect x="143" y="177" width="9" height="14" fill="#fff"/><rect x="152" y="180" width="3" height="11" fill="#fff"/><rect x="143" y="177" width="1" height="14" fill="#8a8a8a"/><rect x="143" y="177" width="9" height="1" fill="#8a8a8a"/><rect x="152" y="178" width="1" height="1" fill="#8a8a8a"/><rect x="153" y="179" width="1" height="1" fill="#8a8a8a"/><rect x="152" y="180" width="4" height="1" fill="#000"/><rect x="155" y="180" width="1" height="12" fill="#000"/><rect x="143" y="191" width="13" height="1" fill="#000"/><rect x="150" y="182" width="4" height="1" fill="#909090"/><rect x="150" y="184" width="4" height="1" fill="#909090"/><rect x="150" y="186" width="4" height="1" fill="#909090"/><rect x="150" y="188" width="4" height="1" fill="#909090"/><rect x="145" y="179" width="5" height="1" fill="#a00000"/><rect x="145" y="179" width="1" height="5" fill="#a00000"/><rect x="149" y="179" width="1" height="5" fill="#a00000"/><rect x="145" y="183" width="5" height="1" fill="#a00000"/><rect x="141" y="183" width="5" height="1" fill="#008000"/><rect x="141" y="183" width="1" height="5" fill="#008000"/><rect x="145" y="183" width="1" height="5" fill="#008000"/><rect x="141" y="187" width="5" height="1" fill="#008000"/><rect x="149" y="184" width="1" height="4" fill="#0000a0"/><rect x="146" y="187" width="4" height="1" fill="#0000a0"/></svg>
<svg style="left:106px;top:145px" width="11" height="10" viewBox="-5.5 -5 11 10"><g fill="#000" transform="scale(1.15)"><rect x="-1.1" y="-4.9" width="2.2" height="2.4" transform="rotate(0)"/><rect x="-1.1" y="-4.9" width="2.2" height="2.4" transform="rotate(45)"/><rect x="-1.1" y="-4.9" width="2.2" height="2.4" transform="rotate(90)"/><rect x="-1.1" y="-4.9" width="2.2" height="2.4" transform="rotate(135)"/><rect x="-1.1" y="-4.9" width="2.2" height="2.4" transform="rotate(180)"/><rect x="-1.1" y="-4.9" width="2.2" height="2.4" transform="rotate(225)"/><rect x="-1.1" y="-4.9" width="2.2" height="2.4" transform="rotate(270)"/><rect x="-1.1" y="-4.9" width="2.2" height="2.4" transform="rotate(315)"/><circle r="3.5"/></g><g fill="#ffff00"><rect x="-1.1" y="-4.9" width="2.2" height="2.4" transform="rotate(0)"/><rect x="-1.1" y="-4.9" width="2.2" height="2.4" transform="rotate(45)"/><rect x="-1.1" y="-4.9" width="2.2" height="2.4" transform="rotate(90)"/><rect x="-1.1" y="-4.9" width="2.2" height="2.4" transform="rotate(135)"/><rect x="-1.1" y="-4.9" width="2.2" height="2.4" transform="rotate(180)"/><rect x="-1.1" y="-4.9" width="2.2" height="2.4" transform="rotate(225)"/><rect x="-1.1" y="-4.9" width="2.2" height="2.4" transform="rotate(270)"/><rect x="-1.1" y="-4.9" width="2.2" height="2.4" transform="rotate(315)"/><circle r="3.3"/></g><circle r="1.8" fill="#000"/><circle r="1.0" fill="#ffffa0"/></svg>
<svg style="left:81px;top:82px" width="17" height="17" viewBox="0 0 17 17"><g fill="#70708a" transform="translate(0.7 0.7)"><rect x="6.8" y="0.3" width="2.4" height="3" transform="rotate(15 8 8)"/><rect x="6.8" y="0.3" width="2.4" height="3" transform="rotate(45 8 8)"/><rect x="6.8" y="0.3" width="2.4" height="3" transform="rotate(75 8 8)"/><rect x="6.8" y="0.3" width="2.4" height="3" transform="rotate(105 8 8)"/><rect x="6.8" y="0.3" width="2.4" height="3" transform="rotate(135 8 8)"/><rect x="6.8" y="0.3" width="2.4" height="3" transform="rotate(165 8 8)"/><rect x="6.8" y="0.3" width="2.4" height="3" transform="rotate(195 8 8)"/><rect x="6.8" y="0.3" width="2.4" height="3" transform="rotate(225 8 8)"/><rect x="6.8" y="0.3" width="2.4" height="3" transform="rotate(255 8 8)"/><rect x="6.8" y="0.3" width="2.4" height="3" transform="rotate(285 8 8)"/><rect x="6.8" y="0.3" width="2.4" height="3" transform="rotate(315 8 8)"/><rect x="6.8" y="0.3" width="2.4" height="3" transform="rotate(345 8 8)"/><circle cx="8" cy="8" r="6.4"/></g><g fill="#8a8ad0"><rect x="6.8" y="0.3" width="2.4" height="3" transform="rotate(15 8 8)"/><rect x="6.8" y="0.3" width="2.4" height="3" transform="rotate(45 8 8)"/><rect x="6.8" y="0.3" width="2.4" height="3" transform="rotate(75 8 8)"/><rect x="6.8" y="0.3" width="2.4" height="3" transform="rotate(105 8 8)"/><rect x="6.8" y="0.3" width="2.4" height="3" transform="rotate(135 8 8)"/><rect x="6.8" y="0.3" width="2.4" height="3" transform="rotate(165 8 8)"/><rect x="6.8" y="0.3" width="2.4" height="3" transform="rotate(195 8 8)"/><rect x="6.8" y="0.3" width="2.4" height="3" transform="rotate(225 8 8)"/><rect x="6.8" y="0.3" width="2.4" height="3" transform="rotate(255 8 8)"/><rect x="6.8" y="0.3" width="2.4" height="3" transform="rotate(285 8 8)"/><rect x="6.8" y="0.3" width="2.4" height="3" transform="rotate(315 8 8)"/><rect x="6.8" y="0.3" width="2.4" height="3" transform="rotate(345 8 8)"/><circle cx="8" cy="8" r="6.4"/></g><circle cx="7.8" cy="7.8" r="3.5" fill="#50506a"/><circle cx="8.2" cy="8.2" r="3.2" fill="#fff"/></svg>
<div class="t" style="left:43px;top:28px;font-style:italic">Referenz</div>
<div class="t" style="left:62px;top:47px;letter-spacing:-0.31px">Device (CODESYS Control Win V3 x64)</div>
<div class="t" style="left:82px;top:66px;letter-spacing:-0.64px">PLC Logic</div>
<div class="t" style="left:103px;top:85px;font-weight:bold;letter-spacing:0.34px">Application</div>
<div class="t" style="left:122px;top:104px;letter-spacing:-0.12px">Library Manager</div>
<div class="t" style="left:122px;top:123px;color:#0000ff;letter-spacing:-0.7px">PLC_PRG (PRG)</div>
<div class="t" style="left:122px;top:142px;letter-spacing:-0.04px">Task Configuration</div>
<div class="t" style="left:142px;top:161px;letter-spacing:-0.2px">MainTask (IEC-Tasks)</div>
<div class="t" style="left:162px;top:180px;letter-spacing:-1.1px">PLC_PRG</div>
<svg style="left:0;top:0" width="273" height="200" shape-rendering="crispEdges"><rect x="123" y="135" width="1" height="1" fill="#ff0000"/><rect x="124" y="134" width="1" height="1" fill="#ff0000"/><rect x="125" y="135" width="1" height="1" fill="#ff0000"/><rect x="126" y="136" width="1" height="1" fill="#ff0000"/><rect x="127" y="135" width="1" height="1" fill="#ff0000"/><rect x="128" y="134" width="1" height="1" fill="#ff0000"/><rect x="129" y="135" width="1" height="1" fill="#ff0000"/><rect x="130" y="136" width="1" height="1" fill="#ff0000"/><rect x="131" y="135" width="1" height="1" fill="#ff0000"/><rect x="132" y="134" width="1" height="1" fill="#ff0000"/><rect x="133" y="135" width="1" height="1" fill="#ff0000"/><rect x="134" y="136" width="1" height="1" fill="#ff0000"/><rect x="135" y="135" width="1" height="1" fill="#ff0000"/><rect x="136" y="134" width="1" height="1" fill="#ff0000"/><rect x="137" y="135" width="1" height="1" fill="#ff0000"/><rect x="138" y="136" width="1" height="1" fill="#ff0000"/><rect x="139" y="135" width="1" height="1" fill="#ff0000"/><rect x="140" y="134" width="1" height="1" fill="#ff0000"/><rect x="141" y="135" width="1" height="1" fill="#ff0000"/><rect x="142" y="136" width="1" height="1" fill="#ff0000"/><rect x="143" y="135" width="1" height="1" fill="#ff0000"/><rect x="144" y="134" width="1" height="1" fill="#ff0000"/><rect x="145" y="135" width="1" height="1" fill="#ff0000"/><rect x="146" y="136" width="1" height="1" fill="#ff0000"/><rect x="147" y="135" width="1" height="1" fill="#ff0000"/><rect x="148" y="134" width="1" height="1" fill="#ff0000"/><rect x="149" y="135" width="1" height="1" fill="#ff0000"/><rect x="150" y="136" width="1" height="1" fill="#ff0000"/><rect x="151" y="135" width="1" height="1" fill="#ff0000"/><rect x="152" y="134" width="1" height="1" fill="#ff0000"/><rect x="153" y="135" width="1" height="1" fill="#ff0000"/><rect x="154" y="136" width="1" height="1" fill="#ff0000"/><rect x="155" y="135" width="1" height="1" fill="#ff0000"/><rect x="156" y="134" width="1" height="1" fill="#ff0000"/><rect x="157" y="135" width="1" height="1" fill="#ff0000"/><rect x="158" y="136" width="1" height="1" fill="#ff0000"/><rect x="159" y="135" width="1" height="1" fill="#ff0000"/><rect x="160" y="134" width="1" height="1" fill="#ff0000"/><rect x="161" y="135" width="1" height="1" fill="#ff0000"/><rect x="162" y="136" width="1" height="1" fill="#ff0000"/><rect x="163" y="135" width="1" height="1" fill="#ff0000"/><rect x="164" y="134" width="1" height="1" fill="#ff0000"/><rect x="165" y="135" width="1" height="1" fill="#ff0000"/><rect x="166" y="136" width="1" height="1" fill="#ff0000"/><rect x="167" y="135" width="1" height="1" fill="#ff0000"/><rect x="168" y="134" width="1" height="1" fill="#ff0000"/><rect x="169" y="135" width="1" height="1" fill="#ff0000"/><rect x="170" y="136" width="1" height="1" fill="#ff0000"/><rect x="171" y="135" width="1" height="1" fill="#ff0000"/><rect x="172" y="134" width="1" height="1" fill="#ff0000"/><rect x="173" y="135" width="1" height="1" fill="#ff0000"/><rect x="174" y="136" width="1" height="1" fill="#ff0000"/><rect x="175" y="135" width="1" height="1" fill="#ff0000"/><rect x="176" y="134" width="1" height="1" fill="#ff0000"/><rect x="177" y="135" width="1" height="1" fill="#ff0000"/><rect x="178" y="136" width="1" height="1" fill="#ff0000"/><rect x="179" y="135" width="1" height="1" fill="#ff0000"/><rect x="180" y="134" width="1" height="1" fill="#ff0000"/><rect x="181" y="135" width="1" height="1" fill="#ff0000"/><rect x="182" y="136" width="1" height="1" fill="#ff0000"/><rect x="183" y="135" width="1" height="1" fill="#ff0000"/><rect x="184" y="134" width="1" height="1" fill="#ff0000"/><rect x="185" y="135" width="1" height="1" fill="#ff0000"/><rect x="186" y="136" width="1" height="1" fill="#ff0000"/><rect x="187" y="135" width="1" height="1" fill="#ff0000"/><rect x="188" y="134" width="1" height="1" fill="#ff0000"/><rect x="189" y="135" width="1" height="1" fill="#ff0000"/><rect x="190" y="136" width="1" height="1" fill="#ff0000"/><rect x="191" y="135" width="1" height="1" fill="#ff0000"/><rect x="192" y="134" width="1" height="1" fill="#ff0000"/><rect x="193" y="135" width="1" height="1" fill="#ff0000"/><rect x="194" y="136" width="1" height="1" fill="#ff0000"/><rect x="195" y="135" width="1" height="1" fill="#ff0000"/><rect x="196" y="134" width="1" height="1" fill="#ff0000"/><rect x="197" y="135" width="1" height="1" fill="#ff0000"/><rect x="198" y="136" width="1" height="1" fill="#ff0000"/></svg>
<div class="a" style="left:23px;top:340px;font-size:27.5px;line-height:33px;color:#22b14c;white-space:nowrap">The generated<br>code is OK</div>
<div class="a" style="left:277px;top:0;width:402px;height:341px;background:#fff;border-left:1px solid #a0a0a0;border-top:1px solid #a0a0a0;border-bottom:1px solid #a0a0a0"></div>
<div class="a" style="left:278px;top:1px;width:401px;height:1px;background:#fafafa"></div>
<div class="a" style="left:278px;top:2px;width:401px;height:18px;background:#f0f0f0"></div>
<div class="a" style="left:393px;top:20px;width:286px;height:1px;background:#a0a0a0"></div>
<div class="a" style="left:278px;top:21px;width:401px;height:1px;background:#efefef"></div>
<div class="a" style="left:278px;top:22px;width:401px;height:1px;background:#f8f8f8"></div>
<svg style="left:0;top:0" width="679" height="30">
<defs><linearGradient id="tg2" x1="0" y1="0" x2="0" y2="1"><stop offset="0" stop-color="#fafafa"/><stop offset="1" stop-color="#ececec"/></linearGradient></defs>
<path d="M394 20V10l6.5-6.5h81l2.5 2.5v14z" fill="url(#tg2)"/>
<path d="M393.5 10.5l7-7h80.5l2.5 2.5v14.5" fill="none" stroke="#a0a0a0"/>
<path d="M278 20v-0.5h3.5l16-16h93.5l2.5 2.5v14z" fill="#fff"/>
<path d="M278 20.5h3.5l16.5-17h93l2.5 2.5v14.5" fill="none" stroke="#a0a0a0"/><rect x="282" y="20" width="111" height="1" fill="#fff"/>
</svg>
<svg style="left:0;top:0" width="679" height="30" shape-rendering="crispEdges"><rect x="298" y="5" width="9" height="15" fill="#fff"/><rect x="307" y="8" width="3" height="12" fill="#fff"/><rect x="307" y="10" width="3" height="10" fill="#ececec"/><rect x="299" y="18" width="11" height="2" fill="#f4f4ee"/><rect x="298" y="5" width="1" height="15" fill="#8a8a8a"/><rect x="298" y="5" width="9" height="1" fill="#8a8a8a"/><rect x="307" y="6" width="1" height="1" fill="#8a8a8a"/><rect x="308" y="7" width="1" height="1" fill="#8a8a8a"/><rect x="309" y="8" width="1" height="1" fill="#aaa"/><rect x="307" y="8" width="4" height="1" fill="#000"/><rect x="307" y="6" width="1" height="2" fill="#fff"/><rect x="310" y="8" width="1" height="13" fill="#000"/><rect x="298" y="20" width="13" height="1" fill="#000"/><rect x="301" y="9" width="5" height="1" fill="#0000ff"/><rect x="301" y="11" width="6" height="1" fill="#0000ff"/><rect x="301" y="13" width="6" height="1" fill="#0000ff"/><rect x="301" y="15" width="6" height="1" fill="#0000ff"/><rect x="301" y="17" width="6" height="1" fill="#0000ff"/></svg>
<div class="t" style="left:320px;top:6px;font-weight:bold;letter-spacing:-0.4px">PLC_PRG</div>
<svg style="left:0;top:0" width="679" height="30" shape-rendering="crispEdges"><rect x="380" y="9" width="2" height="1" fill="#000"/><rect x="386" y="9" width="2" height="1" fill="#000"/><rect x="380" y="10" width="3" height="1" fill="#000"/><rect x="385" y="10" width="3" height="1" fill="#000"/><rect x="381" y="11" width="6" height="1" fill="#000"/><rect x="382" y="12" width="4" height="1" fill="#000"/><rect x="382" y="13" width="4" height="1" fill="#000"/><rect x="381" y="14" width="6" height="1" fill="#000"/><rect x="380" y="15" width="3" height="1" fill="#000"/><rect x="385" y="15" width="3" height="1" fill="#000"/><rect x="380" y="16" width="2" height="1" fill="#000"/><rect x="386" y="16" width="2" height="1" fill="#000"/></svg>
<svg style="left:0;top:0" width="679" height="30" shape-rendering="crispEdges"><rect x="404" y="6" width="10" height="1" fill="#a8a8a8"/><rect x="403" y="7" width="1" height="1" fill="#a8a8a8"/><rect x="402" y="8" width="1" height="1" fill="#a8a8a8"/><rect x="404" y="7" width="9" height="2" fill="#dcdcdc"/><rect x="403" y="8" width="9" height="1" fill="#dcdcdc"/><rect x="401" y="9" width="1" height="11" fill="#9a9a9a"/><rect x="401" y="9" width="11" height="1" fill="#b8b8b8"/><rect x="402" y="10" width="2" height="10" fill="#ffffff"/><rect x="404" y="10" width="3" height="10" fill="#cfcfcf"/><rect x="407" y="9" width="1" height="11" fill="#9a9a9a"/><rect x="408" y="10" width="1" height="10" fill="#ffffff"/><rect x="409" y="10" width="3" height="10" fill="#cfcfcf"/><rect x="412" y="7" width="1" height="13" fill="#b0b0b0"/><rect x="413" y="6" width="1" height="14" fill="#111"/><rect x="402" y="20" width="11" height="1" fill="#111"/><rect x="412" y="19" width="1" height="1" fill="#111"/><rect x="404" y="11" width="2" height="2" fill="#00d000"/><rect x="409" y="11" width="2" height="1" fill="#a00000"/></svg>
<div class="t" style="left:424px;top:6px;letter-spacing:-0.2px">Device</div>
<div class="a" style="left:278px;top:149px;width:401px;height:1px;background:#a0a0a0"></div>
<div class="a" style="left:278px;top:150px;width:401px;height:4px;background:#f0f0f0"></div>
<div class="a" style="left:278px;top:154px;width:401px;height:1px;background:#a0a0a0"></div>
<div class="a" style="left:325px;top:23px;width:2px;height:126px;background:#cfcfcf"></div>
<div class="a" style="left:325px;top:155px;width:2px;height:185px;background:#cfcfcf"></div>
<div class="ln" style="left:294px;top:26px;color:#4a86c8">1</div>
<div class="c" style="left:349px;top:26px"><span class="k">PROGRAM</span> PLC<span class="u">_</span>PRG</div>
<div class="ln" style="left:294px;top:43px;color:#4a86c8">2</div>
<div class="c" style="left:349px;top:43px"><span class="k">VAR</span></div>
<svg style="left:280px;top:44px" width="9" height="9" shape-rendering="crispEdges"><rect x="0.5" y="0.5" width="8" height="8" fill="#fff" stroke="#3a7ec2"/><rect x="0" y="4" width="9" height="1" fill="#3a7ec2"/></svg>
<div class="ln" style="left:294px;top:60px;color:#4a86c8">3</div>
<div class="c" style="left:349px;top:60px">    refl    <span class="o">: </span><span class="k">REFERENCE</span><span class="o"> </span><span class="k">TO</span><span class="o"> </span><span class="k">INT</span><span class="o">;</span></div>
<div class="ln" style="left:294px;top:77px;color:#4a86c8">4</div>
<div class="c" style="left:349px;top:77px">    il      <span class="o">: </span><span class="k">INT</span><span class="o"> := </span><span class="n">1</span><span class="o">;</span></div>
<div class="ln" style="left:294px;top:93px;color:#c83232">5</div>
<div class="c" style="left:349px;top:93px">    xSwitch <span class="o">: </span><span class="k">BOOL</span><span class="o">;</span></div>
<div class="ln" style="left:294px;top:110px;color:#4a86c8">6</div>
<div class="c" style="left:349px;top:110px">    iCnt    <span class="o">: </span><span class="k">INT</span><span class="o">;</span></div>
<div class="ln" style="left:294px;top:127px;color:#4a86c8">7</div>
<div class="c" style="left:349px;top:127px"><span class="k">END<span class="u">_</span>VAR</span></div>
<div class="ln" style="left:294px;top:158px;color:#4a86c8">1</div>
<div class="c" style="left:349px;top:158px"><span class="k">IF</span> <span class="k">NOT</span> xSwitch <span class="k">THEN</span></div>
<svg style="left:280px;top:159px" width="9" height="9" shape-rendering="crispEdges"><rect x="0.5" y="0.5" width="8" height="8" fill="#fff" stroke="#3a7ec2"/><rect x="0" y="4" width="9" height="1" fill="#3a7ec2"/></svg>
<div class="ln" style="left:294px;top:175px;color:#4a86c8">2</div>
<div class="c" style="left:349px;top:175px">    refl <span class="k">REF=</span> <span class="n">0</span><span class="o">;</span></div>
<div class="ln" style="left:294px;top:192px;color:#4a86c8">3</div>
<div class="c" style="left:349px;top:192px"><span class="k">ELSE</span></div>
<svg style="left:280px;top:193px" width="9" height="9" shape-rendering="crispEdges"><rect x="0.5" y="0.5" width="8" height="8" fill="#fff" stroke="#3a7ec2"/><rect x="0" y="4" width="9" height="1" fill="#3a7ec2"/></svg>
<div class="ln" style="left:294px;top:209px;color:#4a86c8">4</div>
<div class="c" style="left:349px;top:209px">    refl <span class="k">REF=</span> il<span class="o">;</span></div>
<div class="ln" style="left:294px;top:225px;color:#4a86c8">5</div>
<div class="c" style="left:349px;top:225px"><span class="k">END<span class="u">_</span>IF</span></div>
<div class="ln" style="left:294px;top:242px;color:#4a86c8">6</div>
<div class="ln" style="left:294px;top:259px;color:#4a86c8">7</div>
<div class="c" style="left:349px;top:259px"><span class="k">IF</span> <span class="k"><span class="u">_</span><span class="u">_</span>ISVALIDREF</span><span class="o">(</span>refl<span class="o">)</span> <span class="k">THEN</span></div>
<svg style="left:280px;top:260px" width="9" height="9" shape-rendering="crispEdges"><rect x="0.5" y="0.5" width="8" height="8" fill="#fff" stroke="#3a7ec2"/><rect x="0" y="4" width="9" height="1" fill="#3a7ec2"/></svg>
<div class="ln" style="left:294px;top:276px;color:#4a86c8">8</div>
<div class="c" style="left:349px;top:276px">    iCnt <span class="o">:=</span> iCnt <span class="o">+</span> refl<span class="o">;</span></div>
<div class="ln" style="left:294px;top:293px;color:#c83232">9</div>
<div class="c" style="left:349px;top:293px"><span class="k">END<span class="u">_</span>IF</span></div>
<svg style="left:0;top:0" width="679" height="300" shape-rendering="crispEdges"><rect x="447" y="187" width="1" height="1" fill="#ff0000"/><rect x="448" y="186" width="1" height="1" fill="#ff0000"/><rect x="449" y="187" width="1" height="1" fill="#ff0000"/><rect x="450" y="188" width="1" height="1" fill="#ff0000"/><rect x="451" y="187" width="1" height="1" fill="#ff0000"/><rect x="452" y="186" width="1" height="1" fill="#ff0000"/><rect x="453" y="187" width="1" height="1" fill="#ff0000"/><rect x="454" y="188" width="1" height="1" fill="#ff0000"/><rect x="455" y="187" width="1" height="1" fill="#ff0000"/><rect x="456" y="186" width="1" height="1" fill="#ff0000"/><rect x="457" y="187" width="1" height="1" fill="#ff0000"/><rect x="458" y="188" width="1" height="1" fill="#ff0000"/><rect x="459" y="187" width="1" height="1" fill="#ff0000"/><rect x="460" y="186" width="1" height="1" fill="#ff0000"/><rect x="461" y="187" width="1" height="1" fill="#ff0000"/><rect x="462" y="188" width="1" height="1" fill="#ff0000"/><rect x="463" y="187" width="1" height="1" fill="#ff0000"/><rect x="464" y="186" width="1" height="1" fill="#ff0000"/><rect x="465" y="187" width="1" height="1" fill="#ff0000"/><rect x="466" y="188" width="1" height="1" fill="#ff0000"/></svg>
<div class="a" style="left:277px;top:345px;width:402px;height:119px;background:#fff;border-left:1px solid #a0a0a0;border-top:1px solid #a0a0a0"></div>
<div class="a" style="left:278px;top:346px;width:401px;height:23px;background:#99b4d1"></div>
<div class="t" style="left:283px;top:350px;letter-spacing:-0.05px">Messages - Total 1 error(s), 0 warning(s), 0 message(s)</div>
<div class="a" style="left:278px;top:369px;width:401px;height:24px;background:#f0f0f0"></div>
<div class="a" style="left:278px;top:369px;width:320px;height:23px;background:#fff;border:1px solid #3d7fc4"></div>
<div class="a" style="left:605px;top:368px;width:74px;height:1px;background:#fff"></div>
<div class="a" style="left:281px;top:372px;width:297px;height:17px;background:#0078d7"></div>
<div class="t" style="left:283px;top:374px;color:#fff;font-size:11.5px">Build</div>
<div class="a" style="left:585px;top:370px;width:12px;height:21px;background:#c5d5ec;border-left:1px solid #3d7fc4"></div>
<svg style="left:589px;top:379px" width="6" height="4" shape-rendering="crispEdges"><path d="M0 0h5v1h-1v1h-1v1h-1v-1h-1v-1h-1z" fill="#000"/></svg>
<div class="a" style="left:278px;top:392px;width:320px;height:1px;background:#a0a0a0"></div>
<div class="a" style="left:605px;top:369px;width:74px;height:22px;background:#e9e9f0;border:1px solid #3d7fc4;border-right:1px solid #3d7fc4"></div>
<div class="a" style="left:605px;top:391px;width:74px;height:2px;background:#a8a8a8"></div>
<svg style="left:609px;top:374px" width="11" height="11"><circle cx="5.5" cy="5.5" r="5.2" fill="#900000"/><circle cx="5.5" cy="5.5" r="4.3" fill="#ff0000"/><path d="M3.3 3.3l4.4 4.4M7.7 3.3l-4.4 4.4" stroke="#fff" stroke-width="2"/></svg>
<div class="t" style="left:626px;top:374px;font-size:11.5px">0 error(s)</div>
<div class="a" style="left:268px;top:364px;width:337px;height:34px;border:5px solid #ed1c24"></div>
<div class="t" style="left:285px;top:400px;font-size:12px;line-height:14px">Description</div>
<div class="a" style="left:279px;top:419px;width:400px;height:19px;background:#f0f0f0"></div>
<div class="a" style="left:279px;top:438px;width:400px;height:1px;background:#e3e3e3"></div>
<div class="a" style="left:279px;top:457px;width:400px;height:1px;background:#e3e3e3"></div>
<div class="t" style="left:303px;top:423px">The application is up to date</div>
<div class="t" style="left:303px;top:442px;letter-spacing:-0.07px">Build complete -- 0 errors, 0 warnings : Ready for download</div>
</body></html>
